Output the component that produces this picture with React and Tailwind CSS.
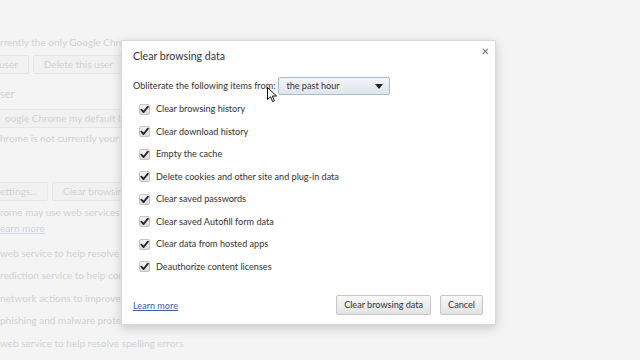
import React from "react";

const items = [
  "Clear browsing history",
  "Clear download history",
  "Empty the cache",
  "Delete cookies and other site and plug-in data",
  "Clear saved passwords",
  "Clear saved Autofill form data",
  "Clear data from hosted apps",
  "Deauthorize content licenses",
];

function Check() {
  return (
    <span className="w-[11px] h-[11px] rounded-[2px] border border-[#c4c4c4] bg-gradient-to-b from-[#f4f4f4] to-[#dcdcdc] flex items-center justify-center shrink-0">
      <svg width="9" height="9" viewBox="0 0 10 10">
        <path d="M1.5 5.2 L4 7.8 L8.8 1.8" fill="none" stroke="#222" strokeWidth="2" strokeLinecap="round" strokeLinejoin="round" />
      </svg>
    </span>
  );
}

function BgBtn({ children }) {
  return (
    <span className="h-[19px] px-[10px] flex items-center whitespace-nowrap border border-[#e6e6e6] bg-[#f1f1f1] rounded-[2px] shrink-0">{children}</span>
  );
}

export default function App() {
  return (
    <div
      className="relative w-[640px] h-[360px] overflow-hidden bg-[#f4f4f4] text-[#d2d2d2] text-[10px] whitespace-nowrap"
      style={{ fontFamily: 'Lato, "Open Sans", sans-serif' }}
    >
      {/* faded settings page */}
      <div className="flex flex-col pt-[35px]">
        <div className="h-[14px] leading-[14px]">rrently the only Google Chrome user.</div>
        <div className="flex gap-[4px] mt-[6px] -ml-[12px]">
          <BgBtn>user</BgBtn>
          <BgBtn>Delete this user</BgBtn>
          <BgBtn>Manage</BgBtn>
        </div>
        <div className="mt-[12px] text-[11px] h-[16px] leading-[16px]">ser</div>
        <div className="mt-[7px] -ml-[6px] flex">
          <BgBtn>oogle Chrome my default browser</BgBtn>
        </div>
        <div className="mt-[3px] h-[14px] leading-[14px]">hrome is not currently your default browser.</div>
        <div className="flex gap-[4px] mt-[37px] -ml-[15px]">
          <BgBtn>settings...</BgBtn>
          <BgBtn>Clear browsing data...</BgBtn>
        </div>
        <div className="mt-[4px] h-[14px] leading-[14px]">rome may use web services to improve your browsing experience.</div>
        <div className="mt-[2px] h-[14px] leading-[14px] underline text-[#c9d3e6]">earn more</div>
        <div className="mt-[11px] h-[14px] leading-[14px]">web service to help resolve navigation errors</div>
        <div className="mt-[8px] h-[14px] leading-[14px]">rediction service to help complete searches</div>
        <div className="mt-[9px] h-[14px] leading-[14px]">network actions to improve page load performance</div>
        <div className="mt-[8px] h-[14px] leading-[14px]">phishing and malware protection</div>
        <div className="mt-[9px] h-[14px] leading-[14px]">web service to help resolve spelling errors</div>
      </div>

      {/* dialog */}
      <div className="absolute left-[121px] top-[40px] w-[375px] h-[285px] bg-white border border-[#d9d9d9] shadow-[0_3px_10px_rgba(0,0,0,0.18)] flex flex-col text-[#333]">
        <div className="flex items-start justify-between pl-[11px] pr-[6px] pt-[7px]">
          <span className="text-[10.6px] leading-[16px] text-[#333]">Clear browsing data</span>
          <span className="text-[13px] leading-[14px] text-[#666] mt-[-4px]">×</span>
        </div>
        <div className="flex items-center pl-[11px] mt-[13px]">
          <span className="text-[9.1px] leading-[14px]">Obliterate the following items from:</span>
          <span className="ml-[3px] w-[112px] h-[18px] rounded-[2px] border border-[#a9bccf] bg-gradient-to-b from-[#f3f5f8] to-[#dfe5ec] flex items-center justify-between pl-[7px] pr-[6px] text-[9.1px]">
            <span>the past hour</span>
            <svg width="8" height="5" viewBox="0 0 8 5"><path d="M0 0 H8 L4 5 Z" fill="#222" /></svg>
          </span>
        </div>
        <div className="flex flex-col pl-[17px] mt-[3px]">
          {items.map((t) => (
            <div key={t} className="h-[22.5px] flex items-center gap-[6px] text-[9.1px]">
              <Check />
              <span>{t}</span>
            </div>
          ))}
        </div>
        <div className="flex-1" />
        <div className="flex items-center justify-between pl-[11px] pr-[12px] pb-[9px]">
          <span className="text-[9.1px] text-[#3b5ea8] underline mt-[2px]">Learn more</span>
          <div className="flex gap-[9px]">
            <span className="h-[20px] px-[7px] flex items-center border border-[#c6c6c6] rounded-[2px] bg-gradient-to-b from-[#f8f8f8] to-[#e3e3e3] text-[9.1px] text-[#333]">Clear browsing data</span>
            <span className="h-[20px] px-[7px] flex items-center border border-[#c6c6c6] rounded-[2px] bg-gradient-to-b from-[#f8f8f8] to-[#e3e3e3] text-[9.1px] text-[#333]">Cancel</span>
          </div>
        </div>
      </div>

      {/* mouse cursor */}
      <svg className="absolute left-[267px] top-[87px]" width="11" height="16" viewBox="0 0 11 16">
        <path d="M0.5 0.5 L0.5 12.5 L3.5 9.7 L5.6 14.6 L7.4 13.8 L5.4 9 L9.6 9 Z" fill="white" stroke="#111" strokeWidth="1" strokeLinejoin="round" />
      </svg>
    </div>
  );
}
